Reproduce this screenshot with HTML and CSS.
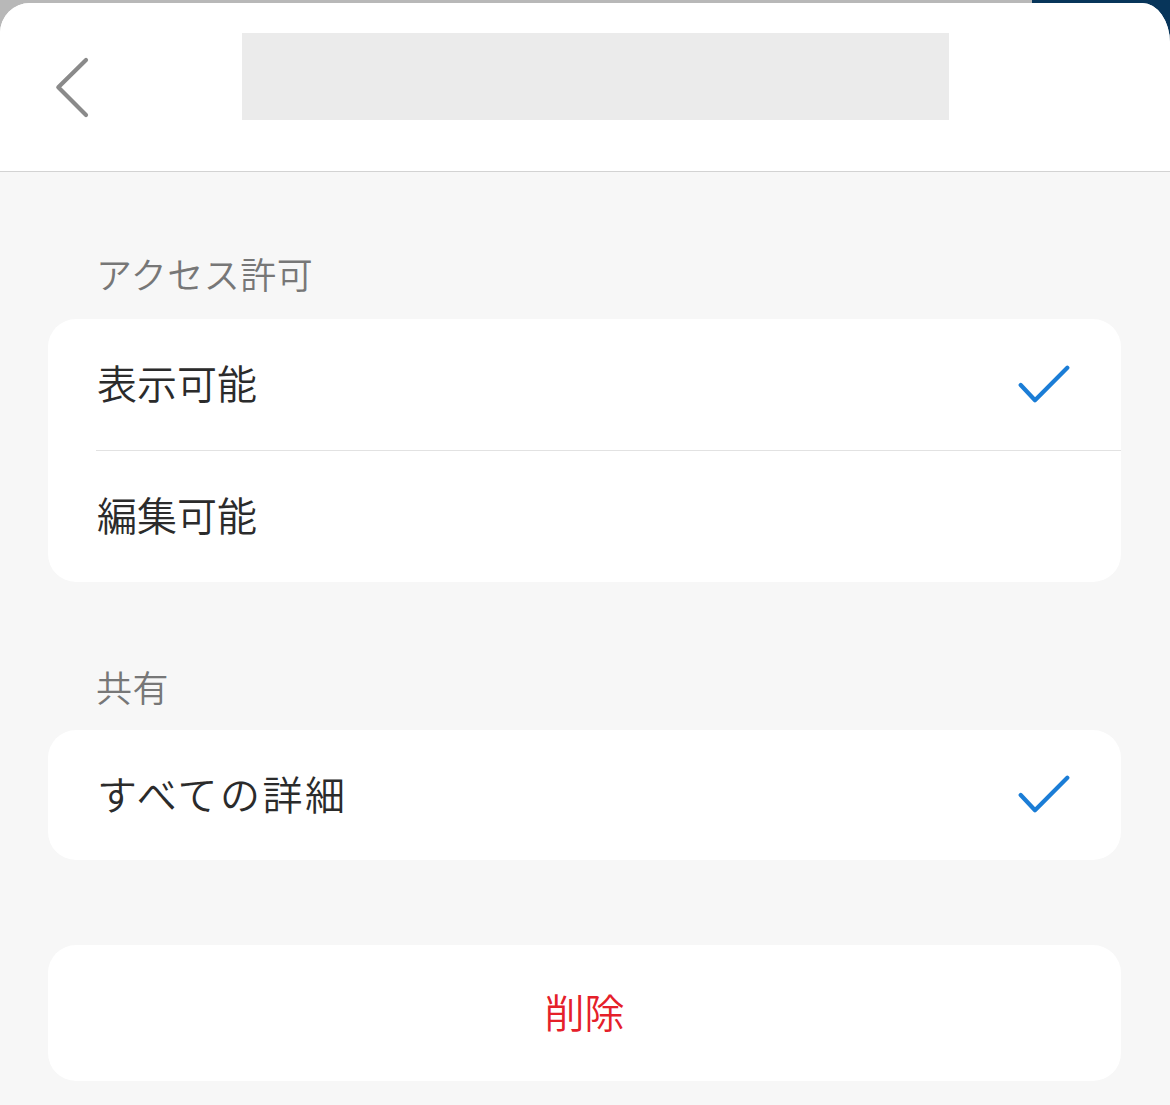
FILE: index.html
```html
<!DOCTYPE html>
<html lang="ja">
<head>
  <meta charset="UTF-8">
  <title>アクセス許可</title>
  <link rel="stylesheet" href="styles.css">
</head>
<body>
  <div class="sheet">
    <header class="topbar">
      <button class="back" type="button" aria-label="戻る">
        <svg width="36" height="62" viewBox="0 0 36 62">
          <path d="M32 4 L4.3 31.3 L32 59" fill="none" stroke="#8a8a8a" stroke-width="4.2" stroke-linecap="round" stroke-linejoin="round"/>
        </svg>
      </button>
      <div class="title-placeholder"></div>
    </header>

    <main class="content">
      <h3 class="section-label">アクセス許可</h3>
      <div class="card">
        <div class="row">
          <span>表示可能</span>
          <svg class="check" width="52" height="40" viewBox="0 0 52 40">
            <path d="M2.7 20 L17 35.3 L49.3 2.7" fill="none" stroke="#1b7dd6" stroke-width="4.2" stroke-linecap="round" stroke-linejoin="round"/>
          </svg>
        </div>
        <div class="row">
          <span>編集可能</span>
        </div>
      </div>

      <h3 class="section-label second">共有</h3>
      <div class="card">
        <div class="row short">
          <span class="kana">すべての詳細</span>
          <svg class="check" width="52" height="40" viewBox="0 0 52 40">
            <path d="M2.7 20 L17 35.3 L49.3 2.7" fill="none" stroke="#1b7dd6" stroke-width="4.2" stroke-linecap="round" stroke-linejoin="round"/>
          </svg>
        </div>
      </div>

      <button class="delete" type="button">削除</button>
    </main>
  </div>
</body>
</html>
```

FILE: styles.css
```css
body {
  margin: 0;
  font-family: "Noto Sans CJK JP", "Noto Sans", sans-serif;
  background: linear-gradient(to right, #b8b8b8 1032px, #07355a 1032px);
}

.sheet {
  margin-top: 3px;
  min-height: calc(100vh - 3px);
  background: #f7f7f7;
  border-radius: 30px 28px 0 0 / 30px 40px 0 0;
  overflow: hidden;
}

.topbar {
  height: 168px;
  background: #fff;
  border-bottom: 1px solid #d3d3d3;
  display: flex;
  align-items: center;
}

.back {
  width: 242px;
  height: 62px;
  padding: 0 0 0 54px;
  border: 0;
  background: none;
  display: flex;
  align-items: center;
  cursor: pointer;
}

.title-placeholder {
  align-self: flex-start;
  margin-top: 30px;
  width: 707px;
  height: 87px;
  background: #ebebeb;
}

.content {
  padding: 77px 49px 0 48px;
}

.section-label {
  margin: 0 0 22px;
  padding-left: 48px;
  font-size: 36px;
  font-weight: 350;
  line-height: 48px;
  letter-spacing: 0.5px;
  color: #777;
}

.section-label.second {
  margin-top: 80px;
  margin-bottom: 20px;
}

.card {
  background: #fff;
  border-radius: 28px;
}

.row {
  height: 131px;
  box-sizing: border-box;
  margin-left: 48px;
  padding: 0 51px 5px 1px;
  display: flex;
  align-items: center;
  justify-content: space-between;
  font-size: 40px;
  font-weight: 350;
  color: #2b2b2b;
}

.row .check {
  margin-top: 5px;
}

.row + .row {
  border-top: 1px solid #e2e2e2;
  height: 132px;
}

.row.short {
  height: 130px;
}

.kana {
  letter-spacing: 2.5px;
}

.delete {
  display: block;
  width: 100%;
  height: 136px;
  margin-top: 85px;
  padding: 0 0 4px;
  border: 0;
  border-radius: 28px;
  background: #fff;
  font-family: inherit;
  font-size: 40px;
  font-weight: 350;
  color: #e5202a;
  cursor: pointer;
}
```
